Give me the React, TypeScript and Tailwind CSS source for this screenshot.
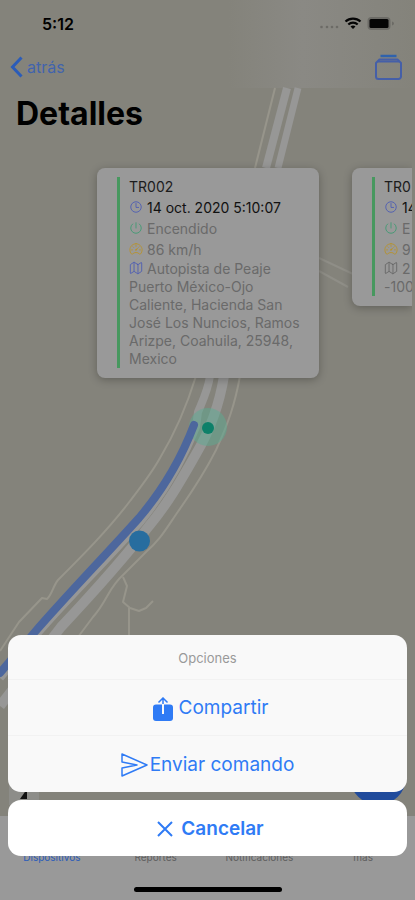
import type { ReactNode } from "react";
import {
  IoMapOutline,
  IoPowerOutline,
  IoSpeedometerOutline,
  IoTimeOutline,
} from "react-icons/io5";

function RoadMap() {
  return (
    <svg
      className="absolute inset-0 h-full w-full"
      viewBox="0 0 415 900"
      preserveAspectRatio="xMinYMin slice"
      fill="none"
      strokeLinejoin="round"
      aria-hidden="true"
    >
      <defs>
        <linearGradient id="barGlow" x1="0" x2="1">
          <stop offset="0.55" stopColor="#8a8984" stopOpacity="0" />
          <stop offset="0.73" stopColor="#8a8984" />
          <stop offset="1" stopColor="#8a8984" stopOpacity="0" />
        </linearGradient>
      </defs>
      <rect width="415" height="88" fill="url(#barGlow)" />
      <g stroke="#97958b" strokeWidth="2">
        <path d="M275 88 255 168" />
        <path d="M319 258 353 274M319 271 348 287" stroke="#8f8e87" />
        <path d="M196 376C188 402 178 428 160 458C151 474 140 488 130 501C108 530 82 556 58 580C53 586 52 595 47 599L42 598L19 622L0 651" />
        <path d="M240 376C235 404 228 424 216 450C204 474 189 496 177 513C166 529 160 540 146 552L124 574C108 588 108 600 93 617L78 637" />
        <path d="M123 577 127 586 123 602 130 608 139 611 146 608 153 601M129 608V640" />
      </g>
      <g stroke="#979796">
        <path d="M287 88 266 168" strokeWidth="8" />
        <path d="M298 88 278 168" strokeWidth="7" />
        <path d="M210 376C208 390 203 400 198 412L196 427C182 462 163 494 141 521C105 562 68 598 36 635L0 678" strokeWidth="8" />
        <path d="M224 376C219 407 209 432 196 454C181 480 169 502 149 526C122 561 91 595 61 627L0 706" strokeWidth="10" />
      </g>
      <circle cx="208" cy="427" r="19" fill="#5cab91" fillOpacity="0.5" />
      <path
        d="M194 425C181 459 162 491 139 518C103 558 66 596 34 633L0 673"
        stroke="#4d679d"
        strokeWidth="8"
        strokeLinecap="round"
      />
      <circle cx="208" cy="428" r="6" fill="#0d8069" />
      <circle cx="139.500" cy="541" r="10.500" fill="#276d9f" />
    </svg>
  );
}

function Row({ icon, children, dark = false }: { icon: ReactNode; children: ReactNode; dark?: boolean }) {
  return (
    <p className={dark ? "leading-[21px] whitespace-nowrap text-[#111]" : "leading-[21px] whitespace-nowrap"}>
      {icon}
      {children}
    </p>
  );
}

const iconBase = "mr-1 inline-block size-[14px] -translate-y-px align-[-2px]";

function PositionCard({
  name,
  date,
  state,
  speed,
  address,
  wide = false,
}: {
  name: string;
  date: string;
  state: string;
  speed: string;
  address: string;
  wide?: boolean;
}) {
  return (
    <article
      className={
        wide
          ? "flex w-[222px] shrink-0 rounded-lg bg-[#999] pt-2 pr-4 pb-[10px] pl-5 shadow-[0_2px_8px_#0004]"
          : "flex min-w-0 flex-1 overflow-hidden rounded-l-lg bg-[#999] pt-2 pb-[10px] pl-5 shadow-[0_2px_8px_#0004]"
      }
    >
      <div className="mt-px mr-[9px] w-[3px] shrink-0 bg-[#47985f]" />
      <div className="min-w-0 text-sm leading-[18px] text-[#6a6a6a]">
        <h2 className="leading-[21px] text-[#1c1c1c]">{name}</h2>
        <Row dark icon={<IoTimeOutline className={`${iconBase} text-[#4c5cb4]`} />}>
          {date}
        </Row>
        <Row icon={<IoPowerOutline className={`${iconBase} text-[#3f9a72]`} />}>{state}</Row>
        <Row icon={<IoSpeedometerOutline className={`${iconBase} text-[#b8922a]`} />}>{speed}</Row>
        <p>
          <IoMapOutline className={wide ? `${iconBase} text-[#4c5cb4]` : `${iconBase} text-[#666]`} />
          {address}
        </p>
      </div>
    </article>
  );
}

function StatusBar() {
  return (
    <div className="flex h-11 items-center justify-between pt-1 pr-5 pl-[42px]">
      <span className="text-base font-semibold text-black">5:12</span>
      <svg className="h-4 w-[76px]" viewBox="0 0 76 16" aria-hidden="true">
        <g fill="#6c6b66">
          <circle cx="2.500" cy="11" r="1.300" />
          <circle cx="8" cy="11" r="1.300" />
          <circle cx="13" cy="11" r="1.300" />
          <circle cx="18" cy="11" r="1.300" />
        </g>
        <g fill="none" stroke="#050505" strokeWidth="2.200">
          <path d="M26.500 5.500a11 11 0 0 1 15 0" />
          <path d="M29.300 8.500a7 7 0 0 1 9.400 0" />
        </g>
        <path d="M31.500 10.500a4 4 0 0 1 5 0L34 13Z" fill="#050505" />
        <rect x="48.500" y="1" width="23" height="13" rx="4" fill="#6c6b66" />
        <rect x="50.500" y="3" width="19" height="9" rx="1.500" fill="#050505" />
        <path d="M73 5.500v4q2-.5 2-2t-2-2" fill="#6c6b66" />
      </svg>
    </div>
  );
}

const tabs = ["Dispositivos", "Reportes", "Notificaciones", "más"];

export default function App() {
  return (
    <div className="relative flex min-h-screen flex-col overflow-hidden bg-[#84837b] font-['Inter','Liberation_Sans',sans-serif]">
      <RoadMap />
      <header className="relative">
        <StatusBar />
        <nav className="flex h-11 items-center justify-between pt-[2px] pr-[13px] pl-[10px] text-[#2b5cb9]">
          <button className="flex items-center gap-1 text-base">
            <svg className="h-[22px] w-[13px]" viewBox="0 0 13 22" fill="none" stroke="currentColor" strokeWidth="3" aria-hidden="true">
              <path d="M11.500 1.500 2.500 11l9 9.500" />
            </svg>
            <span className="text-[#4164ad]">atrás</span>
          </button>
          <button aria-label="Historial">
            <svg className="h-[26px] w-[27px]" viewBox="0 0 27 26" fill="none" stroke="#455fa8" strokeWidth="2" strokeLinejoin="round" aria-hidden="true">
              <path d="M5.500 2h16" stroke="#2f62ad" strokeWidth="2.500" />
              <path d="M4.500 5.500h18L26 9v13.500a2.500 2.500 0 0 1-2.500 2.500h-20A2.500 2.500 0 0 1 1 22.500V9Z" />
              <path d="M3 7.500h21" />
            </svg>
          </button>
        </nav>
      </header>
      <main className="relative flex flex-1 flex-col">
        <h1 className="h-20 pt-1 pl-4 text-[32px] leading-[44px] font-bold text-black">Detalles</h1>
        <section className="mr-[3px] flex items-start gap-[33px] overflow-x-clip pl-[97px]" aria-label="Posiciones">
          <PositionCard
            wide
            name="TR002"
            date="14 oct. 2020 5:10:07"
            state="Encendido"
            speed="86 km/h"
            address="Autopista de Peaje Puerto México-Ojo Caliente, Hacienda San José Los Nuncios, Ramos Arizpe, Coahuila, 25948, Mexico"
          />
          <PositionCard name="TR0" date="14" state="E" speed="9" address="2 -100" />
        </section>
        <div className="mt-auto flex items-end justify-between px-[9px] pb-[11px]">
          <button aria-label="Norte" className="flex h-9 w-[30px] items-end justify-center bg-[#8d8d89] pb-1">
            <svg className="size-4" viewBox="0 0 16 16" aria-hidden="true">
              <path d="M4 14 11 4v10Z" fill="#111" />
            </svg>
          </button>
          <button aria-label="Opciones" className="size-14 rounded-full bg-[#204b9c]" />
        </div>
      </main>
      <nav className="relative h-[84px] bg-[#999]" aria-label="Principal">
        <ul className="grid grid-cols-4 pt-[35px] text-center text-[10px] leading-3 text-[#5f5f5f]">
          {tabs.map((tab, i) => (
            <li key={tab}>
              <a href="#" className={i === 0 ? "text-[#2b5cb9]" : ""}>
                {tab}
              </a>
            </li>
          ))}
        </ul>
        <div className="absolute inset-x-0 bottom-2 mx-auto h-[5px] w-[148px] rounded-full bg-black" />
      </nav>

      <div role="dialog" aria-label="Opciones" className="absolute inset-x-2 bottom-11 flex flex-col gap-2 text-[#2f7bf5]">
        <div className="flex flex-col overflow-hidden rounded-[13px] bg-[#f9f9f9]">
          <p className="h-[45px] border-b border-[#f2f2f2] text-center text-[13px] leading-[46px] text-[#999]">Opciones</p>
          <button className="flex h-14 items-center justify-center gap-[6px] border-b border-[#f2f2f2] pt-[2px] pl-[6px] text-[19px]">
            <svg className="h-6 w-5" viewBox="0 0 20 24" aria-hidden="true">
              <rect y="7.500" width="20" height="16.500" rx="3" fill="currentColor" />
              <path d="M10 7v10" stroke="#f9f9f9" strokeWidth="2" />
              <path d="M10 7V1.500M5.500 5.500 10 1l4.500 4.500" fill="none" stroke="currentColor" strokeWidth="1.500" />
            </svg>
            Compartir
          </button>
          <button className="flex h-14 items-center justify-center gap-[2px] pt-[2px] text-[19px]">
            <svg className="h-6 w-[27px]" viewBox="0 0 27 24" fill="none" stroke="currentColor" strokeWidth="1.500" strokeLinejoin="round" aria-hidden="true">
              <path d="M1 1 26 12 1 23V15L16 12 1 9Z" />
            </svg>
            Enviar comando
          </button>
        </div>
        <button className="flex h-14 items-center justify-center gap-2 rounded-[13px] bg-white pt-[2px] pl-[6px] text-[19px] font-semibold">
          <svg className="size-4" viewBox="0 0 16 16" fill="none" stroke="currentColor" strokeWidth="2" aria-hidden="true">
            <path d="m1 1 14 14m0-14-14 14" />
          </svg>
          Cancelar
        </button>
      </div>
    </div>
  );
}
